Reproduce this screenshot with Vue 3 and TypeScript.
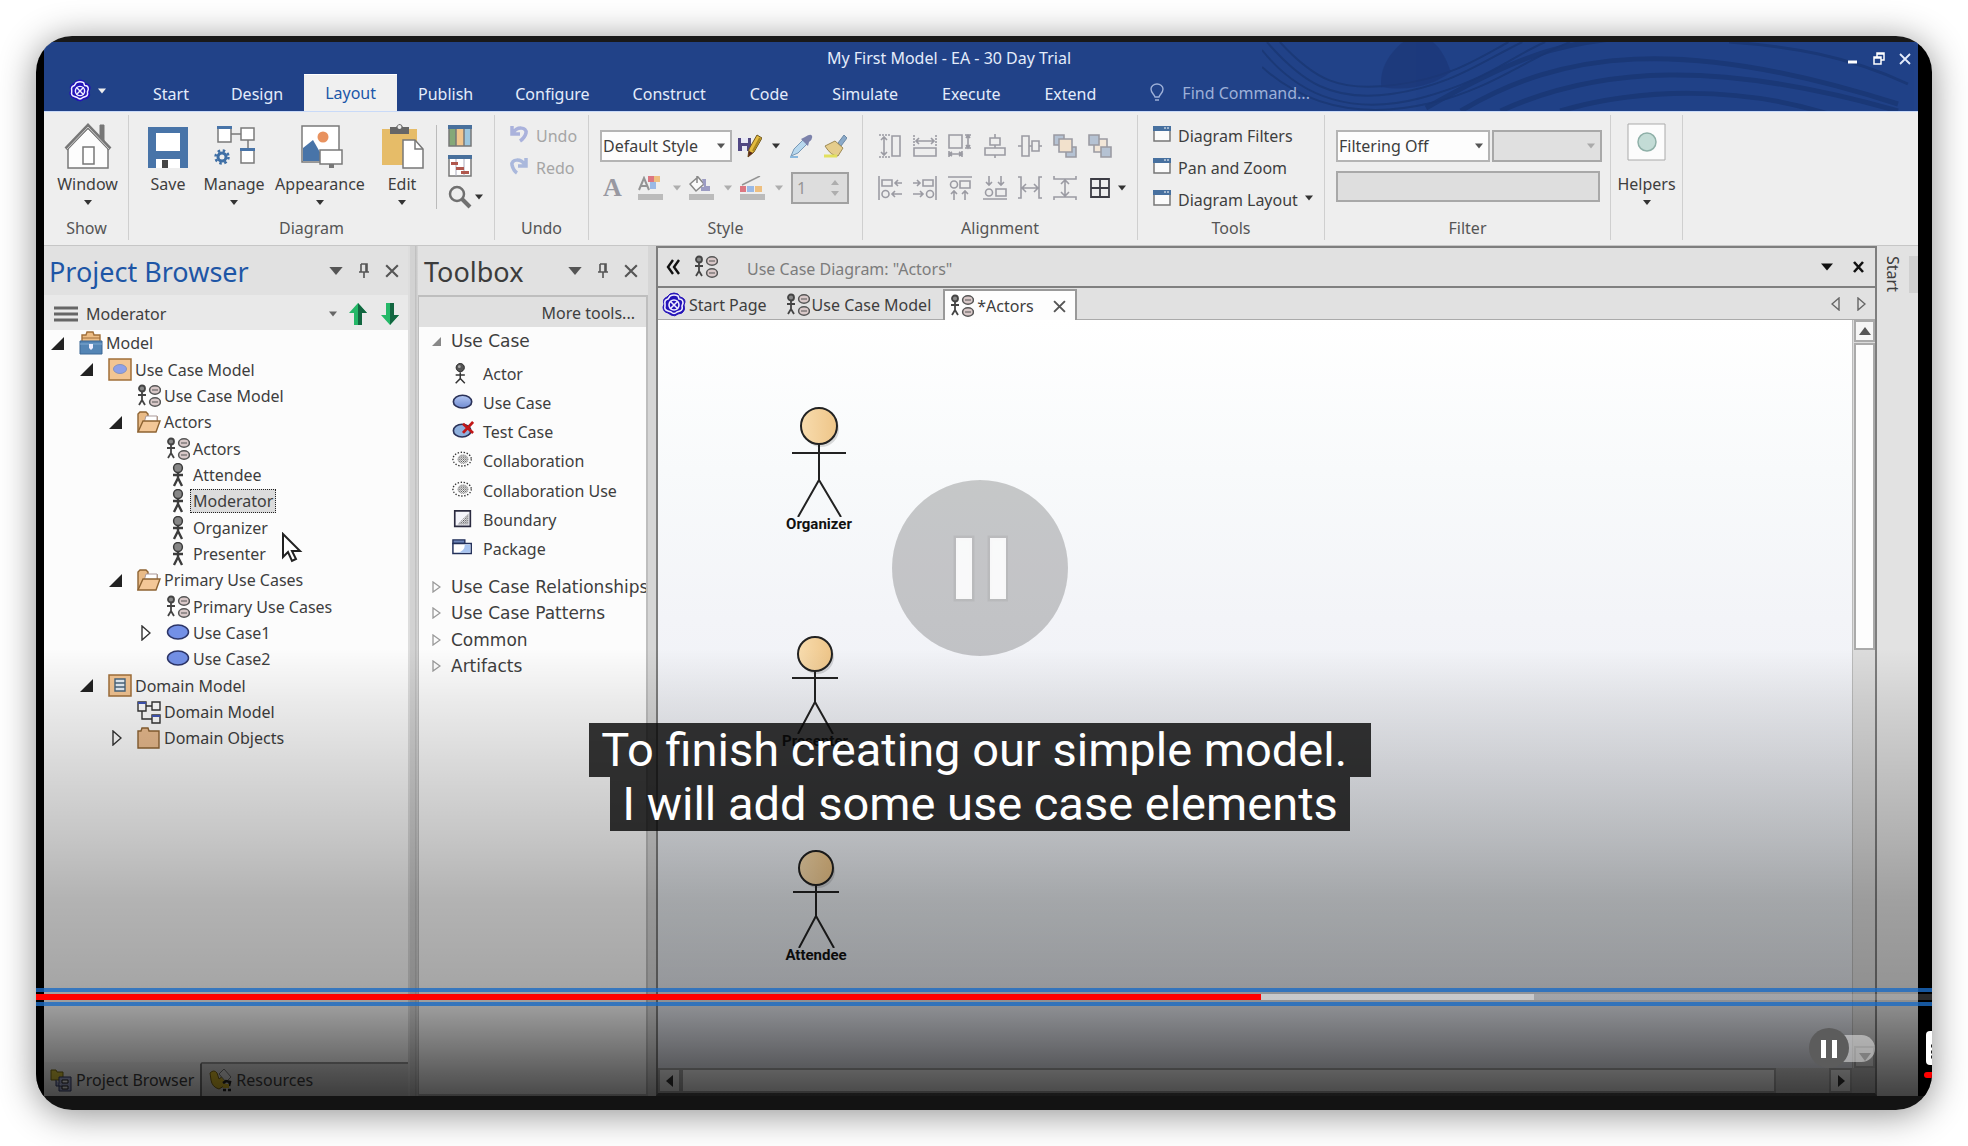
<script setup lang="ts">
import { ref } from 'vue'

interface TreeRow {
  label: string
  level: number
  icon: string
  toggle?: 'open' | 'closed'
}

interface ActorNode {
  name: string
  left: number
  top: number
  width: number
  height: number
  radius: number
  arm: number
  hip: number
}

const ribbonTabs = ['Start', 'Design', 'Layout', 'Publish', 'Configure', 'Construct', 'Code', 'Simulate', 'Execute', 'Extend']
const activeTab = ref('Layout')

const tree: TreeRow[] = [
  { label: 'Model', level: 0, icon: 'root', toggle: 'open' },
  { label: 'Use Case Model', level: 1, icon: 'view-usecase', toggle: 'open' },
  { label: 'Use Case Model', level: 2, icon: 'diagram' },
  { label: 'Actors', level: 2, icon: 'folder-open', toggle: 'open' },
  { label: 'Actors', level: 3, icon: 'diagram' },
  { label: 'Attendee', level: 3, icon: 'person' },
  { label: 'Moderator', level: 3, icon: 'person' },
  { label: 'Organizer', level: 3, icon: 'person' },
  { label: 'Presenter', level: 3, icon: 'person' },
  { label: 'Primary Use Cases', level: 2, icon: 'folder-open', toggle: 'open' },
  { label: 'Primary Use Cases', level: 3, icon: 'diagram' },
  { label: 'Use Case1', level: 3, icon: 'ellipse', toggle: 'closed' },
  { label: 'Use Case2', level: 3, icon: 'ellipse' },
  { label: 'Domain Model', level: 1, icon: 'view-domain', toggle: 'open' },
  { label: 'Domain Model', level: 2, icon: 'class-diagram' },
  { label: 'Domain Objects', level: 2, icon: 'folder', toggle: 'closed' },
]
const selected = ref('Moderator')

const tools = [
  { label: 'Actor', icon: 'tool-actor' },
  { label: 'Use Case', icon: 'tool-usecase' },
  { label: 'Test Case', icon: 'tool-test' },
  { label: 'Collaboration', icon: 'tool-collab' },
  { label: 'Collaboration Use', icon: 'tool-collab' },
  { label: 'Boundary', icon: 'tool-boundary' },
  { label: 'Package', icon: 'tool-package' },
]
const toolGroups = ['Use Case Relationships', 'Use Case Patterns', 'Common', 'Artifacts']

const alignTop = ['al-height', 'al-width', 'al-both', 'al-vcenter', 'al-hcenter', 'al-front', 'al-back']
const alignBottom = ['al-left', 'al-right', 'al-top', 'al-bottom', 'al-across', 'al-down']

const actors: ActorNode[] = [
  { name: 'Organizer', left: 134, top: 87, width: 54, height: 110, radius: 18, arm: 46, hip: 73 },
  { name: 'Presenter', left: 134, top: 316, width: 46, height: 98, radius: 17, arm: 42, hip: 66 },
  { name: 'Attendee', left: 135, top: 530, width: 46, height: 98, radius: 17, arm: 42, hip: 66 },
]

const position = ref(64.6)
const buffered = 79
const autoplay = ref(false)
</script>

<template>
  <div class="stage">
    <svg class="symbols" aria-hidden="true">
      <linearGradient id="skin"><stop offset="0" stop-color="#f8dcae" /><stop offset="1" stop-color="#eec588" /></linearGradient>
      <linearGradient id="oval" x2="0" y2="1"><stop offset="0" stop-color="#b4c8f4" /><stop offset="1" stop-color="#6f8ad0" /></linearGradient>
      <pattern id="dots" width="2" height="2" patternUnits="userSpaceOnUse"><rect width="1" height="1" fill="#444" /><rect x="1" y="1" width="1" height="1" fill="#888" /></pattern>
      <symbol id="caret" viewBox="0 0 10 6"><path d="M0 0h10L5 6z" fill="currentColor" /></symbol>
      <symbol id="logo" viewBox="0 0 26 26">
        <path d="M9 2q4-2 8 0l2 3q5 1 5 5l-1 3q2 5-2 8l-4 1q-3 3-7 1l-3-2q-5-1-5-6l1-3Q1 7 6 5z" fill="#2412b8" stroke="#2412b8" />
        <g fill="none" stroke="#f0eeff" stroke-width="1.6"><path d="M9 4q4-2 8 0l1 3q4 0 4 4l-1 3q1 4-2 5l-3 1q-3 3-6 0l-3-1q-4-1-3-5V12Q3 8 7 7z" /><circle cx="13" cy="13" r="5" /><path d="m9 9 8 8M17 9l-8 8" /></g>
      </symbol>
      <symbol id="pin" viewBox="0 0 12 16"><path d="M3 1h6v8M3 1v8M1 9h10M6 9v6M8 1v8" fill="none" stroke="currentColor" stroke-width="1.6" /></symbol>
      <symbol id="cross" viewBox="0 0 12 12"><path d="m1 1 10 10M11 1 1 11" fill="none" stroke="currentColor" stroke-width="1.8" /></symbol>
      <symbol id="diagram" viewBox="0 0 24 24">
        <g fill="none" stroke="#444" stroke-width="1.8"><path d="M5 8v8M1 11h8M5 16l-3 5M5 16l3 5" /><circle cx="5" cy="4.5" r="3" fill="#888" /></g>
        <g fill="#d8c8c8" stroke="#555" stroke-width="1.5"><ellipse cx="18" cy="6" rx="5.4" ry="4.2" /><ellipse cx="18" cy="18" rx="5.4" ry="4.2" /></g>
        <path d="M15 6h6M15 18h6" stroke="#555" />
      </symbol>
      <symbol id="person" viewBox="0 0 24 24"><g stroke="#3c3c3c" fill="none"><circle cx="12" cy="5" r="4.4" fill="#868686" stroke-width="1.5" /><path d="M7 12h10M12 9v6l-4 8M12 15l4 8" stroke-width="2.4" /></g></symbol>
      <symbol id="ellipse" viewBox="0 0 24 24"><ellipse cx="12" cy="11" rx="10.500" ry="7" fill="#7390e6" stroke="#2c3568" stroke-width="1.5" /></symbol>
      <symbol id="folder-open" viewBox="0 0 24 24"><path d="M1 22V4l2-2h6l2 2v3h9v4" fill="#e9bb87" stroke="#8d6332" stroke-width="1.4" /><path d="M9 6h11v7H7z" fill="#fff" stroke="#a99" /><path d="M1 22 6 11h17l-4 11z" fill="#f3c797" stroke="#8d6332" stroke-width="1.4" /></symbol>
      <symbol id="folder" viewBox="0 0 24 24"><path d="M1 22V5h3l1-3h6l1 3h10v17z" fill="#e9bb8e" stroke="#8d6332" stroke-width="1.4" /></symbol>
      <symbol id="root" viewBox="0 0 24 24"><path d="M3 11V4h4l1-3h6l1 3h6v7" fill="#edbd85" stroke="#a06f3a" stroke-width="1.4" /><path d="M3 7h18" stroke="#a06f3a" /><path d="M1 10h22v13H1z" fill="#5485b5" stroke="#3a6794" /><path d="M1 13h22" stroke="#7ea8d0" /><path d="M10 13h4v4l-2 2-2-2z" fill="#eef" /></symbol>
      <symbol id="view-usecase" viewBox="0 0 24 24"><path d="M1 1h22v21H1z" fill="#f3c593" stroke="#a06f3a" stroke-width="1.5" /><ellipse cx="12" cy="11" rx="6.500" ry="4.500" fill="#8fa0e8" stroke="#8792bd" /></symbol>
      <symbol id="view-domain" viewBox="0 0 24 24"><path d="M1 1h22v21H1z" fill="#f3c593" stroke="#a06f3a" stroke-width="1.5" /><path d="M7 5h10v12H7zM7 9h10M7 13h10" fill="#e4edf5" stroke="#49657c" stroke-width="1.4" /></symbol>
      <symbol id="class-diagram" viewBox="0 0 24 24"><path d="M1 2h8v9H1zM15 2h8v8h-8zM15 15h8v8h-8zM9 6h6M5 11v8h10" fill="#fff" stroke="#333" stroke-width="1.4" /><path d="M1 2h8v2H1zM15 15h8v2h-8z" fill="#3f55b5" /></symbol>
      <symbol id="tool-actor" viewBox="0 0 24 24"><circle cx="9" cy="5" r="4.500" fill="#555" stroke="#222" /><circle cx="8" cy="4" r="1.500" fill="#aaa" /><path d="M4 13h10M9 10v7l-5 5M9 17l5 5" fill="none" stroke="#333" stroke-width="1.600" /></symbol>
      <symbol id="tool-usecase" viewBox="0 0 24 24"><ellipse cx="11.500" cy="10.500" rx="10" ry="7" fill="url(#oval)" stroke="#2b3258" stroke-width="1.800" /></symbol>
      <symbol id="tool-test" viewBox="0 0 24 24"><ellipse cx="11" cy="10.500" rx="9.500" ry="7" fill="#8fb0dd" stroke="#2b3258" stroke-width="1.800" /><path d="m12 3 11 10M23 1 12 13" stroke="#c21717" stroke-width="3" /></symbol>
      <symbol id="tool-collab" viewBox="0 0 24 24"><ellipse cx="11" cy="10" rx="10" ry="7.500" fill="none" stroke="#333" stroke-width="1.500" stroke-dasharray="1.500 1.800" /><ellipse cx="12" cy="10" rx="6" ry="5" fill="url(#dots)" /></symbol>
      <symbol id="tool-boundary" viewBox="0 0 24 24"><path d="M3 2h17v17H3z" fill="#f4f4fa" stroke="#2b2b40" stroke-width="1.800" /><path d="M18 5v12H6z" fill="url(#dots)" /></symbol>
      <symbol id="tool-package" viewBox="0 0 24 24"><path d="M1 2h13v4H1z" fill="#6d84b8" stroke="#23305a" stroke-width="1.500" /><path d="M1 6h20v11H1z" fill="#fff" stroke="#23305a" stroke-width="1.600" /><path d="M20 7v9H5q9-1 9-9z" fill="#a8c4f0" /></symbol>
      <symbol id="al-height" viewBox="0 0 24 24"><path d="M14 2h8v20h-8zM6 3v18M3 6l3-3 3 3M3 18l3 3 3-3" /><path d="M1 1h11M1 23h11" stroke-dasharray="2 1" /></symbol>
      <symbol id="al-width" viewBox="0 0 24 24"><path d="M1 14h22v8H1zM3 7h18M6 4 3 7l3 3M18 4l3 3-3 3" /><path d="M1 1v11M23 1v11" stroke-dasharray="2 1" /></symbol>
      <symbol id="al-both" viewBox="0 0 24 24"><path d="M1 1h13v13H1zM17 1h6M17 14h6M20 1v13M1 17v6M14 17v6M1 20h13M18 4l2-3 2 3M18 11l2 3 2-3M4 18l-3 2 3 2M11 18l3 2-3 2" /></symbol>
      <symbol id="al-vcenter" viewBox="0 0 24 24"><path d="M7 4h10v7H7zM2 14h20v7H2zM12 0v4M12 11v3M12 21v3" /></symbol>
      <symbol id="al-hcenter" viewBox="0 0 24 24"><path d="M4 2h7v20H4zM14 7h7v10h-7zM0 12h4M11 12h3M21 12h3" /></symbol>
      <symbol id="al-front" viewBox="0 0 24 24"><path d="M1 1h10v10H1zM13 13h10v10H13z" fill="#b5c2d3" /><path d="M6 5h13v13H6z" fill="#f2e1cc" /></symbol>
      <symbol id="al-back" viewBox="0 0 24 24"><path d="M6 5h13v13H6z" fill="#f2e6d8" /><path d="M1 1h10v10H1zM13 13h10v10H13z" fill="#b5c2d3" /></symbol>
      <symbol id="al-left" viewBox="0 0 24 24"><path d="M1 0v24M4 4h10v6H4zM17 7h7M20 4l-3 3 3 3M14 18h10M17 15l-3 3 3 3" /><circle cx="7.500" cy="18" r="3.500" /></symbol>
      <symbol id="al-right" viewBox="0 0 24 24"><path d="M23 0v24M10 4h10v6H10zM0 7h7M4 4l3 3-3 3M0 18h10M7 15l3 3-3 3" /><circle cx="17" cy="18" r="3.500" /></symbol>
      <symbol id="al-top" viewBox="0 0 24 24"><path d="M0 1h24M12 5h10v7H12zM6 24v-9M3 18l3-3 3 3M17 24v-9M14 18l3-3 3 3" /><circle cx="6" cy="8.500" r="3.500" /></symbol>
      <symbol id="al-bottom" viewBox="0 0 24 24"><path d="M0 23h24M13 13h10v7H13zM6 0v9M3 6l3 3 3-3M18 0v9M15 6l3 3 3-3" /><circle cx="6" cy="16.500" r="3.500" /></symbol>
      <symbol id="al-across" viewBox="0 0 24 24"><path d="M0 1h3v21H0M24 1h-3v21h3M4 12h16M8 8l-4 4 4 4M16 8l4 4-4 4" /></symbol>
      <symbol id="al-down" viewBox="0 0 24 24"><path d="M1 0v3h22V0M1 24v-3h22v3M12 4v16M8 8l4-4 4 4M8 16l4 4 4-4" /></symbol>
      <symbol id="window" viewBox="0 0 18 16"><path d="M1 1h16v14H1z" fill="#fbfbfb" stroke="#777" stroke-width="1.500" /><path d="M0 0h18v5H0z" fill="#47709f" /><path d="M11 2h2M14 2h2" stroke="#fff" /></symbol>
    </svg>

    <main class="player">
      <div class="app">
        <header class="titlebar">
          <svg class="swirl" viewBox="0 0 660 69" preserveAspectRatio="none" aria-hidden="true">
            <g fill="none" stroke="#1b3977" stroke-width="2"><path d="M5 0C40 40 70 60 130 52S220 20 262 0" /><path d="M18 0c35 38 60 50 115 43S215 18 248 0" /><path d="M0 8c40 50 95 65 160 48S250 15 285 0" /><path d="M0 25c50 45 110 50 170 36S270 15 310 0" /></g>
            <path d="M120 45c-2-18 8-34 22-45h30c8 6 14 18 18 30-15 12-40 20-70 15z" fill="#1c3878" opacity=".7" />
            <g fill="none" stroke="#1a3674" stroke-width="5" opacity=".8"><path d="M200 69C300 10 420-8 640 62" /><path d="M240 69C340 24 460 18 640 69" /><path d="M165 66C260 12 300 2 360-4" /><path d="M300 69C380 46 480 44 570 72" /><path d="M470 0c60 4 120 14 180 42" stroke-width="3" /></g>
          </svg>
          <div class="caption-bar">
            <h1>My First Model - EA - 30 Day Trial</h1>
            <div class="window-buttons">
              <button aria-label="Minimize"><svg width="12" height="12"><path d="M1 9h9" stroke="#fff" stroke-width="3" /></svg></button>
              <button aria-label="Restore"><svg width="12" height="13"><path d="M4 5V1h7v7H8M1 5h7v7H1zM4 2h7M1 6h7" fill="none" stroke="#fff" stroke-width="1.500" /></svg></button>
              <button aria-label="Close"><svg width="12" height="12"><use href="#cross" /></svg></button>
            </div>
          </div>
          <nav class="tabs">
            <button class="app-menu" aria-label="Application menu"><svg width="24" height="24"><use href="#logo" /></svg><svg class="caret"><use href="#caret" /></svg></button>
            <button v-for="tab in ribbonTabs" :key="tab" class="tab" :class="{ active: tab === activeTab }" @click="activeTab = tab">{{ tab }}</button>
            <label class="find">
              <svg width="14" height="20" fill="none" stroke="#9db0d8" stroke-width="1.400"><path d="M5 14C4 11 1 10 1 6a6 5 0 0 1 12 0c0 4-3 5-4 8zM5 17h4" /></svg>
              <input type="text" placeholder="Find Command..." aria-label="Find Command" />
            </label>
          </nav>
        </header>

        <section class="ribbon">
          <div class="group g-show">
            <div class="body">
              <button class="big">
                <svg width="48" height="48" viewBox="0 0 48 48"><path d="M36 3h4v17l-4-4z" fill="#777" stroke="#777" /><path d="M4 46V26L24 6l20 20v20z" fill="#fdfdfd" stroke="#777" stroke-width="1.500" /><path d="M2 27 24 4l22 23" fill="none" stroke="#777" stroke-width="4" /><path d="M3 27 24 5l21 22" fill="none" stroke="#ccc" /><path d="M19 25h11v17H19z" fill="#fff" stroke="#777" stroke-width="1.500" /></svg>
                <span>Window</span><svg class="caret"><use href="#caret" /></svg>
              </button>
            </div>
            <h2>Show</h2>
          </div>

          <div class="group g-diagram">
            <div class="body">
              <button class="big b-save">
                <svg width="48" height="48" viewBox="0 0 48 48"><path d="M4 5h40v41H4z" fill="#4874a8" /><path d="M12 11h24v18H12zM12 37h24v9H12z" fill="#fff" /><path d="M18 38h6v8h-6z" fill="#444" /></svg>
                <span>Save</span>
              </button>
              <button class="big b-manage">
                <svg width="48" height="48" viewBox="0 0 48 48"><path d="M8 5h13v15H8zM31 6h13v12H31zM31 27h13v14H31zM21 12h10M38 18v9" fill="#fff" stroke="#7a7a7a" stroke-width="1.500" /><path d="M7 4h15v3H7zM30 26h15v3H30z" fill="#4874a8" /><circle cx="12" cy="35" r="4" fill="none" stroke="#3f6fa5" stroke-width="3" /><circle cx="12" cy="35" r="6.500" fill="none" stroke="#3f6fa5" stroke-width="2.500" stroke-dasharray="2.500 2.600" /></svg>
                <span>Manage</span><svg class="caret"><use href="#caret" /></svg>
              </button>
              <button class="big b-appearance">
                <svg width="48" height="48" viewBox="0 0 48 48"><path d="M6 4h37v36H6z" fill="#fff" stroke="#7a7a7a" stroke-width="1.500" /><circle cx="27" cy="15" r="5.500" fill="#e8925f" /><path d="M7 39V26l10-8 12 21z" fill="#4874a8" /><path d="M24 28h22v14H24z" fill="#fff" stroke="#7a7a7a" stroke-width="1.500" /><path d="M33 42h5v4h-5z" fill="#777" /></svg>
                <span>Appearance</span><svg class="caret"><use href="#caret" /></svg>
              </button>
              <button class="big b-edit">
                <svg width="48" height="48" viewBox="0 0 48 48"><path d="M4 7h35v36H4z" fill="#e6bc68" /><path d="M12 5h6q4-6 7 0h6v7H12z" fill="#666" /><circle cx="21.500" cy="5" r="2" fill="#eee" /><path d="M25 18h12l8 9v19H25z" fill="#fff" stroke="#777" stroke-width="1.500" /><path d="M37 18v9h8" fill="none" stroke="#777" stroke-width="1.500" /></svg>
                <span>Edit</span><svg class="caret"><use href="#caret" /></svg>
              </button>
              <div class="views">
                <button aria-label="List view"><svg width="24" height="22"><path d="M1 4h7v17H1z" fill="#84a878" /><path d="M8 4h8v17H8z" fill="#f1c58c" /><path d="M16 4h7v17h-7z" fill="#9cc6de" /><path d="M1 1h22v20H1zM8 4v17M16 4v17" fill="none" stroke="#777" stroke-width="1.500" /><path d="M0 0h24v4H0z" fill="#48709c" /></svg></button>
                <button aria-label="Gantt view"><svg width="24" height="22"><path d="M1 1h22v20H1z" fill="#fff" stroke="#777" stroke-width="1.500" /><path d="M8 4v17M16 4v17" stroke="#aab" /><path d="M3 7h7v3H3zM8 12h8v3H8zM13 16h8v3h-8z" fill="#b0574d" /><path d="M0 0h24v4H0z" fill="#48709c" /></svg></button>
                <button class="zoom" aria-label="Zoom"><svg width="24" height="24"><circle cx="9" cy="9" r="7" fill="none" stroke="#707070" stroke-width="2.500" /><path d="m14 14 8 8" stroke="#707070" stroke-width="4" /></svg><svg class="caret"><use href="#caret" /></svg></button>
              </div>
            </div>
            <h2>Diagram</h2>
          </div>

          <div class="group g-undo">
            <div class="body">
              <button class="line" disabled><svg width="20" height="20"><path d="M3 2v8h8M4 9c4-7 14-6 13 0-1 4-3 6-6 8" fill="none" stroke="#aab2dc" stroke-width="3.500" /></svg>Undo</button>
              <button class="line" disabled><svg width="20" height="20"><path d="M17 2v8H9M16 9C12 2 2 3 3 9c1 4 2 6 5 8" fill="none" stroke="#aab8dc" stroke-width="3.500" /></svg>Redo</button>
            </div>
            <h2>Undo</h2>
          </div>

          <div class="group g-style">
            <div class="body">
              <div class="row">
                <span class="combo c-style"><select aria-label="Diagram style"><option>Default Style</option></select><svg class="caret"><use href="#caret" /></svg></span>
                <button class="drop" aria-label="Save style"><svg width="24" height="24"><path d="M0 4h13v13H0z" fill="#514883" /><path d="M3 4h7v5H3zM4 12h5v5H4z" fill="#e8e8f5" /><path d="m10 23 1-8 8-14 5 3-8 14z" fill="#e4bb3f" stroke="#70571e" /><path d="m15 17 7-13" stroke="#a8861f" stroke-width="2" /><path d="m10 23 1-6 4 2z" fill="#5d2b1d" /></svg><svg class="caret"><use href="#caret" /></svg></button>
                <button aria-label="Pick style"><svg width="24" height="24"><path d="m2 22 3-7 9-9 4 4-9 9z" fill="#b8d8ee" stroke="#7898b5" /><path d="M1 23h8" stroke="#8ab8dd" stroke-width="2" /><path d="m12 5 7 7 1-4q4-3 3-6t-7 1z" fill="#7c82ab" /></svg></button>
                <button class="brush" aria-label="Paint style"><svg width="24" height="24"><path d="m15 9 6-8 3 3-6 8z" fill="#8aa9c8" stroke="#6c88a5" /><path d="m2 12 10-5 8 7-5 8q-7 0-13-10z" fill="#e5cd8c" stroke="#9e8a55" /><path d="M1 22h13" stroke="#e2e05e" stroke-width="3" /></svg></button>
              </div>
              <div class="row faded">
                <button class="letter" disabled>A</button>
                <button class="drop" disabled aria-label="Font colour"><svg width="26" height="24"><path d="m1 14 5-12 5 12M3 10h6" fill="none" stroke="#777" stroke-width="2" /><path d="M10 0h6v6h-6z" fill="#d64f5d" /><path d="M16 0h6v6h-6z" fill="#eeb05a" /><path d="M12 6h6v7h-6z" fill="#7fa8e2" /><path d="M0 18h25v6H0z" fill="#aaa" /></svg><svg class="caret"><use href="#caret" /></svg></button>
                <button class="drop" disabled aria-label="Fill colour"><svg width="26" height="24"><path d="m1 8 8-7 6 7-8 7zM8 0v7" fill="#fff" stroke="#666" stroke-width="1.500" /><path d="M13 3h4v7h4v5h-9v-4h3z" fill="#8181b5" /><path d="M0 18h25v6H0z" fill="#aaa" /></svg><svg class="caret"><use href="#caret" /></svg></button>
                <button class="drop" disabled aria-label="Line colour"><svg width="26" height="24"><path d="m2 9 18-9" stroke="#777" stroke-width="1.500" /><path d="M0 10h6v6H0z" fill="#d64f5d" /><path d="M7 10h7v6H7z" fill="#7fa8e2" /><path d="M15 10h7v6h-7z" fill="#eeb05a" /><path d="M0 18h25v6H0z" fill="#aaa" /></svg><svg class="caret"><use href="#caret" /></svg></button>
                <span class="spin"><input type="text" value="1" disabled aria-label="Line width" /><svg width="10" height="18"><path d="M1 6h8L5 1zM1 12h8l-4 5z" fill="#999" /></svg></span>
              </div>
            </div>
            <h2>Style</h2>
          </div>

          <div class="group g-align">
            <div class="body">
              <div class="row"><button v-for="name in alignTop" :key="name" :aria-label="name"><svg class="glyph"><use :href="'#' + name" /></svg></button></div>
              <div class="row">
                <button v-for="name in alignBottom" :key="name" :aria-label="name"><svg class="glyph"><use :href="'#' + name" /></svg></button>
                <button class="drop" aria-label="Grid"><svg width="22" height="22"><path d="M2 2h18v18H2zM11 2v18M2 11h18" fill="none" stroke="#3c3c44" stroke-width="1.800" /></svg><svg class="caret"><use href="#caret" /></svg></button>
              </div>
            </div>
            <h2>Alignment</h2>
          </div>

          <div class="group g-tools">
            <div class="body">
              <button class="line"><svg width="18" height="16"><use href="#window" /></svg>Diagram Filters</button>
              <button class="line"><svg width="18" height="16"><use href="#window" /></svg>Pan and Zoom</button>
              <button class="line"><svg width="18" height="16"><use href="#window" /></svg>Diagram Layout<svg class="caret"><use href="#caret" /></svg></button>
            </div>
            <h2>Tools</h2>
          </div>

          <div class="group g-filter">
            <div class="body">
              <div class="row">
                <span class="combo c-filter"><select aria-label="Filtering"><option>Filtering Off</option></select><svg class="caret"><use href="#caret" /></svg></span>
                <span class="combo c-off"><select disabled aria-label="Filter type"><option></option></select><svg class="caret"><use href="#caret" /></svg></span>
              </div>
              <input class="filter-text" type="text" disabled aria-label="Filter text" />
            </div>
            <h2>Filter</h2>
          </div>

          <div class="group g-help">
            <div class="body">
              <button class="big">
                <svg width="48" height="48" viewBox="0 0 48 48"><path d="M5 2h37v36H5z" fill="#fcfcfc" stroke="#aaa" /><circle cx="24" cy="20" r="9" fill="#c3dcd6" stroke="#8fb0a8" stroke-width="1.500" /></svg>
                <span>Helpers</span><svg class="caret"><use href="#caret" /></svg>
              </button>
            </div>
          </div>
        </section>

        <div class="workspace">
          <aside class="browser">
            <div class="pane-head">
              <h2>Project Browser</h2>
              <button aria-label="Menu"><svg width="14" height="8"><use href="#caret" /></svg></button>
              <button aria-label="Pin"><svg width="12" height="16"><use href="#pin" /></svg></button>
              <button aria-label="Close"><svg width="14" height="14"><use href="#cross" /></svg></button>
            </div>
            <div class="locator">
              <svg width="24" height="16"><path d="M0 2h24M0 8h24M0 14h24" stroke="#666" stroke-width="3" /></svg>
              <select aria-label="Selected element"><option>Moderator</option></select>
              <svg class="caret"><use href="#caret" /></svg>
              <button aria-label="Move up"><svg width="20" height="22"><path d="m10 0 9 10h-5v12H6V10H1z" fill="#25b868" /><path d="m10 0 9 10h-5v12h-4z" fill="#126640" /></svg></button>
              <button aria-label="Move down"><svg width="20" height="22"><path d="m10 22 9-10h-5V0H6v12H1z" fill="#25b868" /><path d="m10 22 9-10h-5V0h-4z" fill="#126640" /></svg></button>
            </div>
            <ul class="tree">
              <li v-for="(row, i) in tree" :key="i" :style="{ paddingLeft: 7 + row.level * 29 + 'px' }">
                <span class="toggle">
                  <svg v-if="row.toggle === 'open'" width="13" height="13"><path d="M13 0v13H0z" fill="#222" /></svg>
                  <svg v-else-if="row.toggle === 'closed'" width="13" height="16"><path d="M4 1v14l8-7z" fill="#fff" stroke="#333" stroke-width="1.400" /></svg>
                </span>
                <svg class="node-icon"><use :href="'#' + row.icon" /></svg>
                <button :class="{ selected: row.label === selected }" @click="selected = row.label">{{ row.label }}</button>
              </li>
            </ul>
            <div class="pane-tabs">
              <button class="current"><svg width="22" height="24"><path d="M1 2h5l1 2h6v8H1z" fill="#d8c53c" stroke="#7b6c15" /><path d="M6 12v6h6M9 9h12v14H9z" fill="#a9b0d8" stroke="#353c6b" /><path d="M12 12h6v3h-6zM12 18h6v3h-6z" fill="#fff" stroke="#222" /></svg>Project Browser</button>
              <button class="other"><svg width="24" height="24"><path d="M1 5q4-4 7 0l2 6 4-3q4 4 1 10l-5 3q-7-2-8-9z" fill="#d8b92c" stroke="#7b6315" /><path d="m10 6 5-5 7 8-5 5z" fill="#ddd" stroke="#777" /><path d="m14 15 3-2 4 1-1 4M14 22h3M19 22h3" fill="none" stroke="#222" stroke-width="2.500" /><path d="M14 16h6v4h-6z" fill="#d8b92c" /></svg>Resources</button>
            </div>
          </aside>

          <aside class="toolbox">
            <div class="pane-head">
              <h2>Toolbox</h2>
              <button aria-label="Menu"><svg width="14" height="8"><use href="#caret" /></svg></button>
              <button aria-label="Pin"><svg width="12" height="16"><use href="#pin" /></svg></button>
              <button aria-label="Close"><svg width="14" height="14"><use href="#cross" /></svg></button>
            </div>
            <div class="tool-panel">
              <a class="more" href="#more">More tools...</a>
              <button class="tool-group"><svg width="9" height="9"><path d="M9 0v9H0z" fill="#888" /></svg>Use Case</button>
              <ul class="tool-list">
                <li v-for="tool in tools" :key="tool.label"><button><svg class="node-icon"><use :href="'#' + tool.icon" /></svg>{{ tool.label }}</button></li>
              </ul>
              <div class="group-list">
                <button v-for="name in toolGroups" :key="name" class="tool-group"><svg width="9" height="12"><path d="M1 1v10l7-5z" fill="none" stroke="#999" stroke-width="1.300" /></svg>{{ name }}</button>
              </div>
            </div>
          </aside>

          <section class="document">
            <div class="doc-head">
              <svg width="14" height="16"><path d="M7 1 2 8l5 7M13 1 8 8l5 7" fill="none" stroke="#111" stroke-width="2.400" /></svg>
              <svg width="24" height="24"><use href="#diagram" /></svg>
              <h2>Use Case Diagram: "Actors"</h2>
              <button aria-label="Menu"><svg width="12" height="8"><use href="#caret" /></svg></button>
              <button aria-label="Close"><svg width="12" height="12"><path d="m1 1 9 10M10 1 1 11" stroke="#111" stroke-width="2.600" /></svg></button>
            </div>
            <div class="doc-tabs">
              <button><svg width="26" height="26"><use href="#logo" /></svg>Start Page</button>
              <button><svg width="24" height="24"><use href="#diagram" /></svg>Use Case Model</button>
              <button class="current"><svg width="24" height="24"><use href="#diagram" /></svg>*Actors<svg class="close" width="13" height="13"><use href="#cross" /></svg></button>
              <span class="steps"><button aria-label="Previous tab"><svg width="9" height="14"><path d="M8 1v12L1 7z" fill="none" stroke="#666" stroke-width="1.400" /></svg></button><button aria-label="Next tab"><svg width="9" height="14"><path d="M1 1v12l7-6z" fill="none" stroke="#666" stroke-width="1.400" /></svg></button></span>
            </div>
            <div class="view">
              <div class="canvas">
                <figure v-for="a in actors" :key="a.name" class="actor" :style="{ left: a.left + 'px', top: a.top + 'px', width: a.width + 'px' }">
                  <svg :width="a.width" :height="a.height" fill="none" stroke="#222" stroke-width="2">
                    <circle :cx="a.width / 2 + 2" :cy="a.radius + 4" :r="a.radius" fill="#0002" stroke="none" />
                    <circle :cx="a.width / 2" :cy="a.radius + 1" :r="a.radius" fill="url(#skin)" />
                    <path :d="`M${a.width / 2} ${a.radius * 2 + 1}V${a.hip}L6 ${a.height}M${a.width / 2} ${a.hip}L${a.width - 5} ${a.height}M0 ${a.arm}H${a.width}`" />
                  </svg>
                  <figcaption>{{ a.name }}</figcaption>
                </figure>
              </div>
              <div class="vscroll">
                <button aria-label="Scroll up"><svg width="14" height="10"><path d="m7 1 6 8H1z" fill="#555" /></svg></button>
                <div class="vthumb"></div>
                <button class="end" aria-label="Scroll down"><svg width="14" height="10"><path d="m7 9 6-8H1z" fill="#333" /></svg></button>
              </div>
            </div>
            <div class="hscroll">
              <button aria-label="Scroll left"><svg width="10" height="14"><path d="m1 7 7-6v12z" fill="#333" /></svg></button>
              <div class="hthumb"></div>
              <button aria-label="Scroll right"><svg width="10" height="14"><path d="M9 7 2 1v12z" fill="#333" /></svg></button>
              <i></i>
            </div>
          </section>

          <aside class="dock"><button>Start</button><i></i></aside>
        </div>
      </div>

      <svg class="pointer" width="22" height="32" aria-hidden="true"><path d="M2 2v23l5-5 4 9 4-2-4-8h8z" fill="#fff" stroke="#222" stroke-width="2" /></svg>
      <div class="shade"></div>
      <button class="bezel" aria-label="Pause"><svg width="56" height="70"><path d="M4 5h16v61H4zM38 5h16v61H38z" fill="#fff" fill-opacity=".9" stroke="#000" stroke-opacity=".05" stroke-width="5" paint-order="stroke" /></svg></button>
      <p class="subtitles"><span>To finish creating our simple model.&nbsp;</span><span>I will add some use case elements</span></p>
      <input
        v-model.number="position"
        class="seek"
        type="range"
        min="0"
        max="100"
        step="any"
        aria-label="Seek"
        :style="{ '--played': position + '%', '--loaded': buffered + '%' }"
      />
      <label class="autoplay">
        <input v-model="autoplay" type="checkbox" aria-label="Autoplay" />
        <span class="knob"><svg width="40" height="40"><path d="M12 12h5v18h-5zM23 12h5v18h-5z" fill="#fff" /></svg></span>
      </label>
      <button class="captions-toggle" aria-label="Subtitles"><svg width="8" height="48"><rect x="2" width="24" height="34" rx="4" fill="#fff" /><path d="M7 15h1M7 21h1M7 26h1" stroke="#222" stroke-width="3" /><rect y="41" width="24" height="6" rx="3" fill="#f00" /></svg></button>
    </main>
  </div>
</template>

<style>
body { margin: 0; background: #fff; }
</style>

<style scoped>
* { box-sizing: border-box; }
.stage { min-height: 100vh; padding: 36px; display: flex; font: 16px/24px "Noto Sans", "DejaVu Sans", sans-serif; color: #3e3e3e; }
.symbols { position: absolute; width: 0; height: 0; }
h1, h2, p, ul, figure { margin: 0; padding: 0; font: inherit; }
ul { list-style: none; }
svg { display: block; flex: none; }
button { display: flex; align-items: center; padding: 0; border: 0; background: none; font: inherit; color: inherit; white-space: nowrap; }
select, input { font: inherit; color: inherit; }
select { appearance: none; opacity: 1; }
.caret { width: 10px; height: 6px; color: #333; }

.player { position: relative; flex: 1; display: flex; padding: 6px 14px 14px 8px; border-radius: 36px; overflow: hidden; background: linear-gradient(#191919 6px, #000 6px, #000 calc(100% - 14px), #131313 calc(100% - 14px)); box-shadow: 0 4px 36px rgba(0, 0, 0, .45); }
.app { flex: 1; min-width: 0; display: flex; flex-direction: column; background: #e1e1e1; }

.titlebar { position: relative; height: 70px; display: flex; flex-direction: column; background: #214288; border-bottom: 1px solid #c9daf8; color: #e4ecfb; }
.swirl { position: absolute; right: 0; top: 0; width: 35%; height: 69px; }
.caption-bar { position: relative; height: 32px; display: flex; align-items: center; justify-content: center; padding-right: 64px; }
.window-buttons { position: absolute; right: 7px; top: 10px; display: flex; gap: 14px; }
.tabs { position: relative; height: 37px; display: flex; align-items: flex-end; }
.app-menu { height: 37px; width: 88px; padding: 0 0 4px 24px; gap: 6px; }
.app-menu .caret { width: 8px; color: #eee; }
.tab { height: 36px; padding: 0 21px; border-top: 1px solid transparent; }
.tab:nth-child(n + 7) { padding: 0 22px; }
.tab.active { background: #f0f0f0; color: #1b57a8; border-color: #fff; height: 37px; }
.find { display: flex; align-items: center; gap: 18px; padding: 0 0 6px 32px; }
.find input { width: 160px; height: 24px; padding: 0; border: 0; background: none; }
.find input::placeholder { color: #9db0d8; opacity: 1; }

.ribbon { height: 134px; padding-left: 1px; display: flex; background: #eee; border-bottom: 1px solid #c6c6c6; }
.group { height: 125px; margin-top: 3px; border-right: 1px solid #cfcfcf; flex: none; display: flex; flex-direction: column; }
.group h2 { text-align: center; line-height: 23px; color: #555; }
.body { height: 104px; display: flex; }
.g-show { width: 84px; }
.g-diagram { width: 366px; }
.g-undo { width: 94px; }
.g-style { width: 274px; }
.g-align { width: 275px; }
.g-tools { width: 187px; }
.g-filter { width: 286px; }
.g-help { width: 72px; }
.big { flex-direction: column; padding-top: 7px; }
.big span { margin: 2px 0 4px; }
.big .caret { width: 8px; height: 5px; }
.g-show .big, .g-help .big { flex: 1; }
.g-show .big { padding-left: 2px; }
.g-diagram .body { gap: 4px; padding-left: 11px; }
.b-save { width: 56px; }
.b-manage { width: 68px; }
.b-appearance { width: 96px; }
.b-edit { width: 60px; }
.views { height: 84px; margin-top: 10px; padding-left: 11px; border-left: 1px solid #bbb; display: flex; flex-direction: column; justify-content: space-between; }
.zoom { gap: 3px; }
.zoom .caret { width: 8px; }
.g-undo .body, .g-tools .body { flex-direction: column; padding-top: 5px; }
.line { height: 32px; gap: 7px; }
.line > svg:first-child { margin-bottom: 4px; }
.line .caret { width: 8px; margin-bottom: 4px; }
.line:disabled { color: #a5a5a5; }
.g-undo .line { padding-left: 14px; }
.g-tools .line { padding-left: 15px; }
.g-style .body, .g-align .body, .g-filter .body { flex-direction: column; padding-top: 15px; gap: 10px; }
.row { display: flex; align-items: center; height: 32px; }
.g-style .row { padding-left: 11px; }
.combo { position: relative; display: flex; }
.combo select { width: 100%; height: 32px; padding: 0 4px 0 1px; border: 2px solid #b4b4b4; border-radius: 0; background: #fdfdfd; }
.combo select:disabled { background: #e0e0e0; border-color: #a8a8a8; }
.combo .caret { position: absolute; right: 7px; top: 13px; width: 8px; color: #555; }
.c-style { width: 132px; margin-right: 6px; }
.drop { gap: 10px; }
.drop .caret { width: 8px; }
.g-style .drop { margin-right: 9px; }
.brush { margin-left: 10px; }
.faded { opacity: .75; }
.letter { width: 22px; margin: 0 13px 0 3px; font: bold 26px/26px "Liberation Serif", serif; color: #7c7c88; }
.faded .drop { margin-right: 8px; gap: 9px; }
.faded .caret { color: #999; }
.spin { position: relative; display: flex; }
.spin input { width: 58px; height: 32px; padding: 0 4px; border: 2px solid #888; background: #d8d8d8; color: #777; }
.spin svg { position: absolute; right: 9px; top: 7px; }
.g-align .row { gap: 11px; padding-left: 15px; }
.glyph { width: 24px; height: 24px; fill: none; stroke: #9b9ba3; stroke-width: 1.6; }
.g-align .drop { gap: 7px; padding-left: 1px; }
.g-filter .body { padding-left: 11px; gap: 9px; }
.g-filter .row { gap: 2px; }
.c-filter { width: 154px; }
.c-off { width: 110px; }
.c-off .caret { color: #aaa; }
.filter-text { width: 264px; height: 31px; border: 2px solid #a8a8a8; background: #dedede; }

.workspace { flex: 1; display: flex; min-height: 0; }
.browser { width: 366px; display: flex; flex-direction: column; border-right: 2px solid #ddd; background: #e4e4e4; }
.pane-head { height: 49px; display: flex; align-items: center; gap: 15px; padding: 0 9px 0 5px; background: #e1e1e1; color: #555; }
.pane-head h2 { flex: 1; padding-top: 2px; font-size: 27px; line-height: 36px; color: #3c3c3c; }
.browser .pane-head h2 { color: #1e56a6; }
.locator { height: 35px; display: flex; align-items: center; padding: 2px 8px 0 10px; background: #e9e9e9; }
.locator select { flex: 1; margin-left: 8px; padding: 0; border: 0; background: none; }
.locator .caret { width: 8px; margin-right: 11px; color: #666; }
.locator button + button { margin-left: 12px; }
.tree { flex: 1; background: #fcfcfc; display: grid; grid-template-rows: repeat(16, minmax(26px, 3.6%)); }
.tree li { display: flex; align-items: center; }
.toggle { width: 28px; }
.node-icon { width: 22px; height: 22px; }
.tree .node-icon { width: 24px; height: 24px; }
.tree button { padding: 0 2px; line-height: 22px; border: 1px dotted transparent; }
.tree button.selected { background: #dcdcdc; border-color: #222; }
.pane-tabs { height: 34px; display: flex; background: #d4d4d4; }
.pane-tabs button { padding: 0 7px; gap: 3px; border-top: 2px solid #999; }
.pane-tabs .other { flex: 1; }
.pane-tabs .current { padding: 0 6px; gap: 4px; background: #f4f4f4; border-top-color: transparent; border-right: 2px solid #777; }

.toolbox { width: 246px; padding: 0 8px; display: flex; flex-direction: column; background: linear-gradient(90deg, #d2d2d2 5px, #bcbcbc 5px, #d8d8d8 8px, #e1e1e1 8px, #e1e1e1 238px, #d6d6d6 238px); }
.toolbox .pane-head { padding: 0 10px 0 6px; }
.tool-panel { flex: 1; display: flex; flex-direction: column; background: #fcfcfc; border: 2px solid #bebebe; border-width: 2px 2px 2px 1px; overflow: hidden; }
.more { height: 30px; padding: 2px 11px 0 0; line-height: 28px; text-align: right; background: #e0e0e0; color: inherit; text-decoration: none; }
.tool-group { height: 26px; padding-left: 13px; gap: 10px; font: 17px/26px "DejaVu Sans", sans-serif; }
.tool-panel > .tool-group { margin: 1px 0 5px; }
.tool-list { height: 205px; display: grid; grid-auto-rows: 1fr; }
.tool-list li { display: flex; padding-left: 33px; }
.tool-list button { gap: 9px; }
.group-list { height: 105px; margin-top: 10px; display: grid; grid-auto-rows: 1fr; }

.document { flex: 1; min-width: 0; display: flex; flex-direction: column; border: 2px solid #7e7e7e; border-bottom: 3px solid #555; }
.doc-head { height: 40px; display: flex; align-items: center; padding: 0 10px 0 8px; gap: 14px; border-bottom: 2px solid #808080; background: #e1e1e1; color: #111; }
.doc-head h2 { flex: 1; padding-top: 4px; margin-left: 15px; color: #7c7c7c; }
.doc-head button + button { margin-left: 6px; }
.doc-tabs { height: 32px; display: flex; border-bottom: 1px solid #aaa; background: #e1e1e1; }
.doc-tabs > button { padding: 2px 0 0 3px; gap: 2px; margin-right: 14px; }
.doc-tabs button + button { margin-left: 2px; }
.doc-tabs .current { height: 31px; margin: 1px 0 0 -2px; padding: 1px 9px 0 5px; gap: 3px; background: #fdfdfd; border: 2px solid #999; border-bottom: 0; }
.close { margin-left: 16px; color: #555; }
.steps { margin-left: auto; display: flex; gap: 15px; padding-right: 9px; }
.view { flex: 1; display: flex; min-height: 0; }
.canvas { position: relative; flex: 1; background: linear-gradient(#fff, #f8fafb 20%, #f3f4f8 40%, #eef0f5 60%, #e6eaee 80%, #e0e2ea); }
.actor { position: absolute; display: flex; flex-direction: column; align-items: center; }
.actor figcaption { font: bold 15px/15px Roboto, sans-serif; color: #111; }
.vscroll { width: 23px; padding-left: 1px; display: flex; flex-direction: column; background: #dcdcdc; border-left: 1px solid #bbb; }
.vscroll button { height: 22px; justify-content: center; border: 2px solid #aaa; background: #f6f6f6; }
.vthumb { height: 41%; margin-top: 1px; background: #fdfdfd; border: 2px solid #aaa; }
.vscroll .end { margin-top: auto; background: none; }
.hscroll { height: 25px; display: flex; background: #cfcfcf; }
.hscroll button { width: 23px; justify-content: center; border: 2px solid #aaa; background: #eee; }
.hthumb { width: 90%; margin-right: auto; background: #f6f6f6; border: 2px solid #aaa; }
.hscroll i { width: 23px; background: #bbb; }
.dock { width: 41px; display: flex; justify-content: space-between; align-items: flex-start; background: #e2e2e2; }
.dock button { margin: 10px 0 0 4px; writing-mode: vertical-rl; }
.dock i { width: 9px; height: 37px; margin-top: 10px; background: #d0d0d0; }

.pointer { position: absolute; left: 245px; top: 496px; }
.shade { position: absolute; inset: 57% 0 14px; pointer-events: none; background: linear-gradient(rgba(0, 0, 0, 0), rgba(0, 0, 0, .07) 12%, rgba(0, 0, 0, .15) 28%, rgba(0, 0, 0, .22) 43%, rgba(0, 0, 0, .29) 56%, rgba(0, 0, 0, .34) 75%, rgba(0, 0, 0, .38) 80%, rgba(0, 0, 0, .51) 88%, rgba(0, 0, 0, .71)); }
.bezel { position: absolute; left: 50%; top: 50%; width: 176px; height: 176px; margin: -93px 0 0 -92px; justify-content: center; border-radius: 50%; background: rgba(0, 0, 0, .2); }
.subtitles { position: absolute; left: 0; right: 0; bottom: 279px; display: flex; flex-direction: column; align-items: center; padding-right: 8px; font: 47px/54px Roboto, sans-serif; color: #fff; white-space: pre; }
.subtitles span { padding: 0 12px; background: rgba(8, 8, 8, .82); }
.seek { appearance: none; position: absolute; left: 0; bottom: 110px; width: 100%; height: 6px; margin: 0; outline: 4px solid rgba(27, 107, 196, .8); outline-offset: 2px; background: linear-gradient(90deg, #f00 var(--played), rgba(255, 255, 255, .5) var(--played), rgba(255, 255, 255, .5) var(--loaded), rgba(255, 255, 255, .16) var(--loaded)); }
.seek::-webkit-slider-thumb { appearance: none; width: 0; height: 0; }
.autoplay { position: absolute; right: 57px; bottom: 42px; width: 66px; height: 40px; }
.autoplay input { appearance: none; position: absolute; left: 6px; top: 7px; width: 60px; height: 27px; margin: 0; border-radius: 14px; background: rgba(255, 255, 255, .45); }
.knob { position: absolute; left: 0; top: 0; width: 40px; height: 40px; border-radius: 50%; background: #5c5c5c; }
.captions-toggle { position: absolute; right: 0; bottom: 31px; }
</style>
